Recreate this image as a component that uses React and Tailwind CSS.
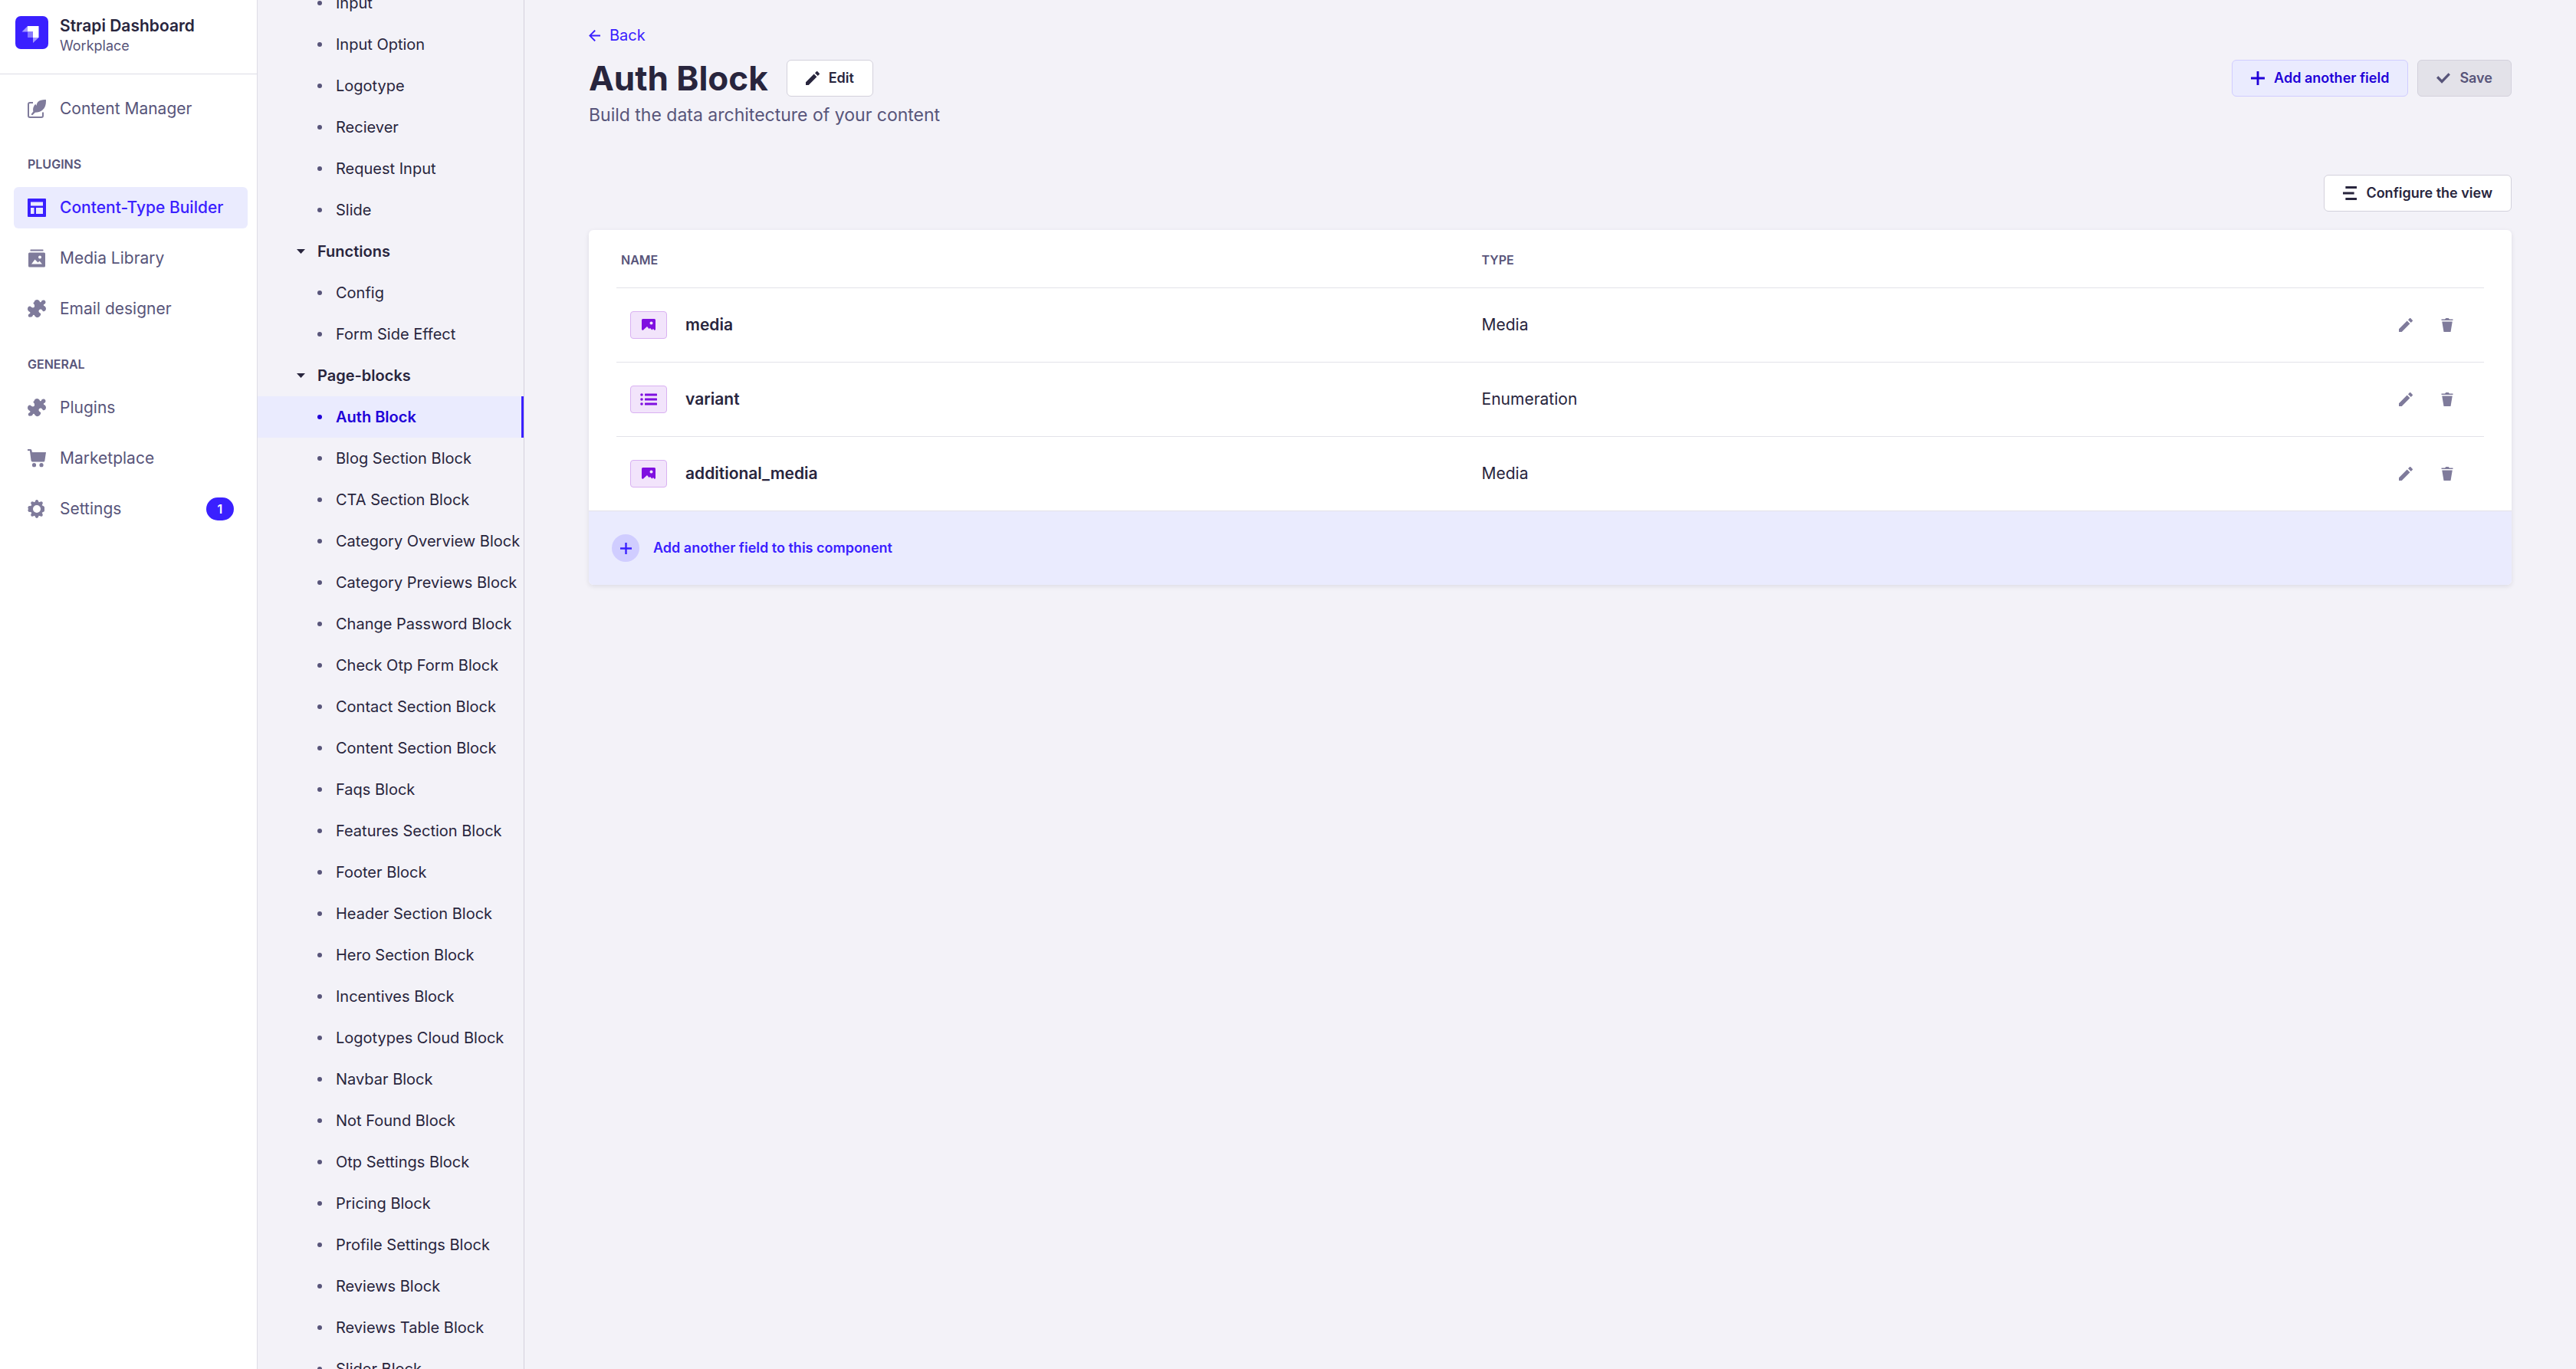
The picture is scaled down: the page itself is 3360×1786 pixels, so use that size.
import React from "react";

const Svg = ({ className, viewBox = "0 0 24 24", children }) => (
  <svg className={className} viewBox={viewBox} fill="currentColor" aria-hidden="true">
    {children}
  </svg>
);

const Pencil = ({ className }) => (
  <Svg className={className}>
    <path fillRule="evenodd" clipRule="evenodd" d="M23.604 3.514c.528.528.528 1.36 0 1.887l-2.622 2.607-4.99-4.99L18.6.396a1.322 1.322 0 0 1 1.887 0l3.118 3.118ZM0 24v-4.99l14.2-14.2 4.99 4.99L4.99 24H0Z" />
  </Svg>
);
const Trash = ({ className }) => (
  <Svg className={className}>
    <path d="M3.236 6.149a.2.2 0 0 0-.197.233L6 24h12l2.96-17.618a.2.2 0 0 0-.196-.233H3.236ZM21.8 1.983c.11 0 .2.09.2.2v1.584a.2.2 0 0 1-.2.2H2.2a.2.2 0 0 1-.2-.2V2.183c0-.11.09-.2.2-.2h5.511c.9 0 1.631-1.09 1.631-1.983h5.316c0 .894.73 1.983 1.631 1.983H21.8Z" />
  </Svg>
);
const Plus = ({ className }) => (
  <Svg className={className}>
    <path d="M24 13.604a.3.3 0 0 1-.3.3h-9.795V23.7a.3.3 0 0 1-.3.3h-3.21a.3.3 0 0 1-.3-.3v-9.795H.3a.3.3 0 0 1-.3-.3v-3.21a.3.3 0 0 1 .3-.3h9.795V.3a.3.3 0 0 1 .3-.3h3.21a.3.3 0 0 1 .3.3v9.795H23.7a.3.3 0 0 1 .3.3v3.21Z" />
  </Svg>
);
const Check = ({ className }) => (
  <Svg className={className}>
    <path d="M20.727 2.97a.2.2 0 0 1 .286 0l2.85 2.89a.2.2 0 0 1 0 .28L9.554 20.854a.2.2 0 0 1-.285 0l-9.13-9.243a.2.2 0 0 1 0-.281l2.85-2.892a.2.2 0 0 1 .284 0l6.14 6.209L20.726 2.97Z" />
  </Svg>
);
const ArrowLeft = ({ className }) => (
  <Svg className={className}>
    <path d="M24 13.3a.2.2 0 0 1-.2.2H5.74l8.239 8.239a.2.2 0 0 1 0 .282L12.14 23.86a.2.2 0 0 1-.282 0L.14 12.14a.2.2 0 0 1 0-.282L11.86.14a.2.2 0 0 1 .282 0L13.98 1.98a.2.2 0 0 1 0 .282L5.74 10.5H23.8c.11 0 .2.09.2.2v2.6Z" />
  </Svg>
);
const Rows = ({ className }) => (
  <Svg className={className}>
    <path d="M4.5 0H24v4H4.5zM0 10h19.5v4H0zM4.5 20H24v4H4.5z" />
  </Svg>
);
const Feather = ({ className }) => (
  <Svg className={className}>
    <path d="M23.9.1c.4 5.600-.6 10.200-4.400 13.400-2.600 2.300-6.200 3.300-9.700 3.300L6.600 19.900c-.9.800-2.400-.400-1.600-1.400l2.400-2.900c-.9-3.600.2-7.400 2.900-9.900.5 1 .8 1.500 1.300 2 .2-2 .9-3.600 1.800-4.700C16.200.7 19.700-.1 23.900.1Z" />
    <path d="M7 4H3a2 2 0 0 0-2 2v15a2 2 0 0 0 2 2h15a2 2 0 0 0 2-2v-4.500" fill="none" stroke="currentColor" strokeWidth="2" />
  </Svg>
);
const Layout = ({ className }) => (
  <Svg className={className}>
    <path fillRule="evenodd" d="M1 0h22a1 1 0 0 1 1 1v22a1 1 0 0 1-1 1H1a1 1 0 0 1-1-1V1a1 1 0 0 1 1-1Zm3 4.500v5h16v-5H4Zm0 7.500v8h4.500v-8H4Zm7 0v8h9v-8h-9Z" />
  </Svg>
);
const Images = ({ className }) => (
  <Svg className={className}>
    <path fillRule="evenodd" d="M4 .5h16a.5.500 0 0 1 .5.500v1a.5.500 0 0 1-.5.500H4a.5.500 0 0 1-.5-.5V1A.5.500 0 0 1 4 .5ZM2.500 4.500h19A1.500 1.500 0 0 1 23 6v16a1.500 1.500 0 0 1-1.500 1.500h-19A1.500 1.500 0 0 1 1 22V6a1.500 1.500 0 0 1 1.500-1.500ZM16 8.500a2 2 0 1 0 0 4 2 2 0 0 0 0-4ZM5 19.500h14l-3.500-4-2 2-4-4-4.500 6Z" />
  </Svg>
);
const Puzzle = ({ className }) => (
  <Svg className={className}>
    <path d="M8.500 3.200C9 1 10.600 0 12.300 0c1.700 0 3 1 3.700 2.700.5.700 1.300.6 1.800.1.500-1.600 1.800-2.500 3.200-2.300 1.600.2 2.600 1.500 2.500 3-.1 1.200-.9 2.100-2.200 2.600-.6.500-.6 1.300.1 1.800 1.600.6 2.600 2 2.600 3.800 0 1.900-1.300 3.600-3.400 3.600-1 0-1.400-2.800-3.600-2.800-1.500 0-2.500 1.100-2.500 2.500 0 2.200 2.800 2.600 2.800 3.600-.2 2.200-1.600 3.900-3.400 4.400-2.200.6-4.300-.6-5-2.700-.5-.8-1.400-.8-1.900-.1-.5 1.500-1.700 2.400-3.100 2.300C1.800 23.300.7 22.100.8 20.500c.1-1.200.8-2.100 2.200-2.600.6-.5.6-1.300-.1-1.800C1 15.200 0 13.700 0 12c0-1.900 1.300-3.600 3.100-3.500 1.200.1 1.500 1.900 3.700 1.900 1.500 0 2.400-1 2.300-2.400-.1-2.100-1.500-2.400-1.700-3.400 0-.7.600-1 1.100-1.400Z" />
  </Svg>
);
const Cart = ({ className }) => (
  <Svg className={className}>
    <path d="M0 0h3.600c.9 0 1.600.6 1.800 1.500L5.900 4H24l-1.700 11.400a1.400 1.400 0 0 1-1.400 1.100H6.300a1.700 1.700 0 0 1-1.700-1.400L2.900 2H0V0Z" />
    <circle cx="8.500" cy="20.700" r="2.600" />
    <circle cx="18" cy="20.700" r="2.600" />
  </Svg>
);
const Gear = ({ className }) => (
  <Svg className={className}>
    <path fillRule="evenodd" d="M10.200 1.200a2 2 0 0 1 3.600 0l.9 2.100 2.300-.9a2 2 0 0 1 2.600 2.600l-.9 2.300 2.100.9a2 2 0 0 1 1.200 1.600v4.400a2 2 0 0 1-1.200 1.600l-2.100.9.900 2.300a2 2 0 0 1-2.600 2.600l-2.300-.9-.9 2.100a2 2 0 0 1-3.600 0l-.9-2.100-2.300.9A2 2 0 0 1 4.400 19l.9-2.300-2.100-.9a2.200 2.200 0 0 1-2-3.800 2.200 2.200 0 0 1 2-3.800l2.100-.9L4.400 5A2 2 0 0 1 7 2.400l2.300.9.900-2.100ZM12 7a5 5 0 1 0 0 10 5 5 0 0 0 0-10Z" />
  </Svg>
);
const Picture = ({ className }) => (
  <Svg className={className} viewBox="0 0 18 16">
    <path fillRule="evenodd" d="M1.500 0h15A1.500 1.500 0 0 1 18 1.500V14l-1.200 1-1.800-2-1.600 1.400L11 12l-1.400 1L7 10l-5.500 5L0 14V1.500A1.500 1.500 0 0 1 1.500 0Zm11 3.500a2 2 0 1 0 0 4 2 2 0 0 0 0-4Z" />
  </Svg>
);
const List = ({ className }) => (
  <Svg className={className} viewBox="0 0 22 16">
    <circle cx="2" cy="2" r="1.800" /><circle cx="2" cy="8" r="1.800" /><circle cx="2" cy="14" r="1.800" />
    <rect x="6" y=".5" width="16" height="3" rx=".5" /><rect x="6" y="6.500" width="16" height="3" rx=".5" /><rect x="6" y="12.500" width="16" height="3" rx=".5" />
  </Svg>
);
const Logo = () => (
  <svg className="size-[43px] shrink-0" viewBox="0 0 43 43" aria-hidden="true">
    <rect width="43" height="43" rx="7" fill="#3a20ff" />
    <path d="M16 13h14.500v15H23v-7.500h-7z" fill="#fff" />
    <path d="M16 20.500h7V28h-6.500l-.5-.5z" fill="#8777ff" />
    <path d="M8.500 20.500 16 13v7.500zM23 28h7.500L23 35z" fill="#a398ff" />
  </svg>
);

function NavItem({ icon: Icon, label, active, badge }) {
  return (
    <a
      href="#"
      aria-current={active ? "page" : undefined}
      className={
        "flex h-[54px] items-center rounded-md px-[18px] text-[21px] leading-[30px] " +
        (active ? "bg-[#eaebfe] font-medium text-[#3a20ff]" : "text-[#58557a]")
      }
    >
      <Icon className={"mr-[18px] size-6 shrink-0 " + (active ? "" : "text-[#7f7b9b]")} />
      <span>{label}</span>
      {badge && (
        <span className="ml-auto flex h-[30px] w-9 items-center justify-center rounded-full bg-[#3a20ff] text-[16px] font-semibold text-white">
          {badge}
        </span>
      )}
    </a>
  );
}

function NavSection({ title, children }) {
  return (
    <section className="mt-[33px]">
      <h2 className="mb-[18px] px-[18px] text-[16px] leading-6 font-semibold text-[#58557a] uppercase">{title}</h2>
      <div className="flex flex-col gap-3">{children}</div>
    </section>
  );
}

const groups = [
  { items: ["Input", "Input Option", "Logotype", "Reciever", "Request Input", "Slide"] },
  { title: "Functions", items: ["Config", "Form Side Effect"] },
  {
    title: "Page-blocks",
    items: [
      "Auth Block", "Blog Section Block", "CTA Section Block", "Category Overview Block",
      "Category Previews Block", "Change Password Block", "Check Otp Form Block",
      "Contact Section Block", "Content Section Block", "Faqs Block", "Features Section Block",
      "Footer Block", "Header Section Block", "Hero Section Block", "Incentives Block",
      "Logotypes Cloud Block", "Navbar Block", "Not Found Block", "Otp Settings Block",
      "Pricing Block", "Profile Settings Block", "Reviews Block", "Reviews Table Block", "Slider Block",
    ],
  },
];

function SubNavItem({ label }) {
  const active = label === "Auth Block";
  return (
    <li>
      <a
        href="#"
        aria-current={active ? "page" : undefined}
        className={
          "flex h-[54px] items-center pl-[78px] text-[20px] leading-[30px] whitespace-nowrap " +
          (active
            ? "border-r-[3px] border-[#3a20ff] bg-[#eaebfe] font-semibold text-[#2000d8]"
            : "text-[#28253d]")
        }
      >
        <span className={"mr-[18px] size-1.5 shrink-0 rounded-full " + (active ? "bg-[#2000d8]" : "bg-[#58557a]")} />
        {label}
      </a>
    </li>
  );
}

const button = "flex h-12 items-center gap-3 rounded-md border px-6 text-[18px] leading-6 font-semibold ";

const fields = [
  { name: "media", type: "Media", icon: Picture },
  { name: "variant", type: "Enumeration", icon: List },
  { name: "additional_media", type: "Media", icon: Picture },
];

export default function App() {
  return (
    <div className="flex h-screen overflow-hidden bg-[#f3f2f8] font-['Inter','Liberation_Sans',sans-serif] text-[#28253d]">
      <nav aria-label="Main" className="w-[336px] shrink-0 border-r border-[#dddce5] bg-white">
        <div className="flex h-[97px] items-start gap-[15px] border-b border-[#dddce5] pt-[21px] pl-5">
          <Logo />
          <div>
            <div className="text-[21px] leading-[26px] font-semibold">Strapi Dashboard</div>
            <div className="text-[18px] leading-[26px] text-[#58557a]">Workplace</div>
          </div>
        </div>
        <div className="pt-[18px] pr-3 pl-[18px]">
          <NavItem icon={Feather} label="Content Manager" />
          <NavSection title="Plugins">
            <NavItem icon={Layout} label="Content-Type Builder" active />
            <NavItem icon={Images} label="Media Library" />
            <NavItem icon={Puzzle} label="Email designer" />
          </NavSection>
          <NavSection title="General">
            <NavItem icon={Puzzle} label="Plugins" />
            <NavItem icon={Cart} label="Marketplace" />
            <NavItem icon={Gear} label="Settings" badge="1" />
          </NavSection>
        </div>
      </nav>

      <nav aria-label="Components" className="w-[348px] shrink-0 overflow-hidden border-r border-[#d3d1dc]">
        <div className="-mt-[23px]">
          {groups.map((group) => (
            <section key={group.title || "shared"}>
              {group.title && (
                <button type="button" aria-expanded="true" className="flex h-[54px] w-full items-center pl-[51px] text-[20px] leading-[30px] font-semibold">
                  <Svg className="mr-4 h-1.5 w-[11px]" viewBox="0 0 11 6"><path d="M0 0h11L5.500 6z" /></Svg>
                  {group.title}
                </button>
              )}
              <ul>{group.items.map((item) => <SubNavItem key={item} label={item} />)}</ul>
            </section>
          ))}
        </div>
      </nav>

      <main className="min-w-0 flex-1 px-[84px] pt-[30px]">
        <a href="#" className="flex w-fit items-center gap-3 text-[20px] leading-8 text-[#3a20ff]">
          <ArrowLeft className="size-[15px]" />
          Back
        </a>
        <div className="mt-4 flex h-12 items-center justify-between">
          <div className="flex items-center gap-6">
            <h1 className="text-[44px] leading-[60px] font-bold">Auth Block</h1>
            <button type="button" className={button + "border-[#d3d1dc] bg-white"}>
              <Pencil className="size-[18px]" />
              Edit
            </button>
          </div>
          <div className="flex gap-3">
            <button type="button" className={button + "border-[#d0cdff] bg-[#eaebfe] text-[#2000d8]"}>
              <Plus className="size-[18px]" />
              Add another field
            </button>
            <button type="button" disabled className={button + "border-[#d3d1dc] bg-[#e3e2e9] text-[#58557a]"}>
              <Check className="size-[18px]" />
              Save
            </button>
          </div>
        </div>
        <p className="mt-1.5 text-[23px] leading-9 text-[#58557a]">Build the data architecture of your content</p>

        <div className="mt-[60px] flex justify-end">
          <button type="button" className={button + "border-[#d3d1dc] bg-white"}>
            <Rows className="size-[18px]" />
            Configure the view
          </button>
        </div>

        <div className="mt-6 overflow-hidden rounded-md bg-white shadow-[0_2px_6px_rgba(33,33,52,0.1)]">
          <div className="px-9">
            <table className="w-full table-fixed text-left">
              <thead>
                <tr className="h-[75px] text-[16px] leading-6 text-[#58557a] uppercase">
                  <th className="w-[46%] pt-1 pl-1.5 font-semibold">Name</th>
                  <th className="pt-1 pl-2 font-semibold">Type</th>
                  <th className="w-[160px]" aria-label="Actions" />
                </tr>
              </thead>
              <tbody>
                {fields.map(({ name, type, icon: Icon }) => (
                  <tr key={name} className="h-[97px] border-t border-[#e3e2e9] text-[21px] leading-[30px]">
                    <td className="pl-[18px]">
                      <div className="flex items-center gap-6">
                        <span className="flex h-9 w-12 items-center justify-center rounded border border-[#d9b1f2] bg-[#f2e4fb] text-[#7f10e0]">
                          <Icon className="h-4 w-[22px]" />
                        </span>
                        <span className="font-semibold">{name}</span>
                      </div>
                    </td>
                    <td className="pl-2">{type}</td>
                    <td>
                      <div className="flex justify-end gap-9 pr-[39px] text-[#7f7b9b]">
                        <button type="button" aria-label={"Edit " + name}><Pencil className="size-[18px]" /></button>
                        <button type="button" aria-label={"Delete " + name}><Trash className="size-[18px]" /></button>
                      </div>
                    </td>
                  </tr>
                ))}
              </tbody>
            </table>
          </div>
          <button type="button" className="flex h-[97px] w-full items-center gap-[18px] border-t border-[#e3e2e9] bg-[#eaebfe] pl-[30px] text-[18px] leading-6 font-semibold text-[#3a20ff]">
            <span className="flex size-9 items-center justify-center rounded-full bg-[#d0cdff]">
              <Plus className="size-[15px]" />
            </span>
            Add another field to this component
          </button>
        </div>
      </main>
    </div>
  );
}
